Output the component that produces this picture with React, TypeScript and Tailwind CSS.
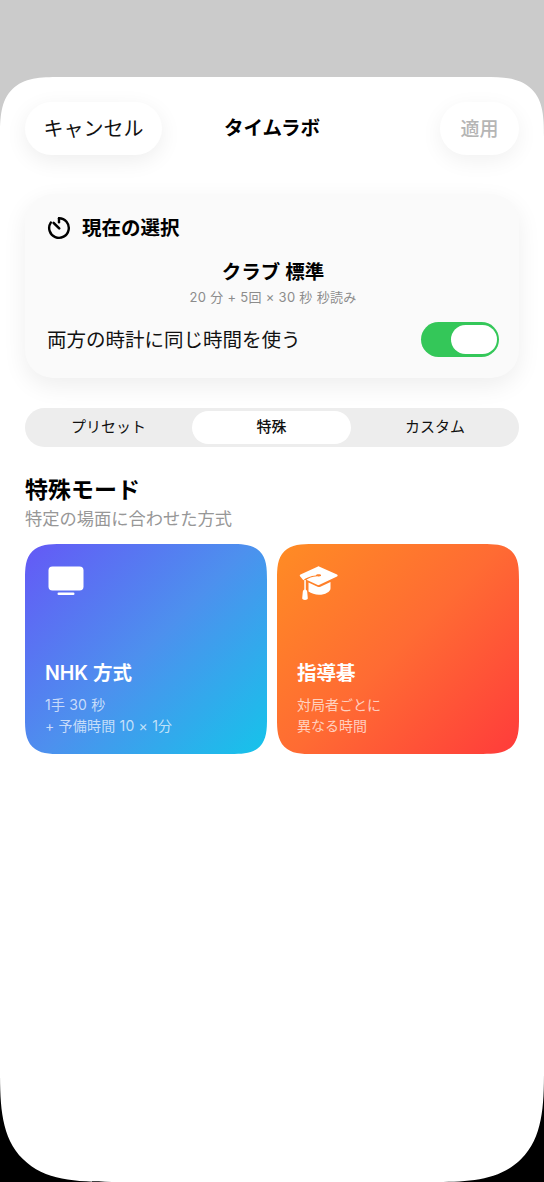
const font = "font-['Inter','Noto_Sans_CJK_JP',sans-serif]";

const TimerIcon = () => (
  <svg width="24" height="24" viewBox="0 0 24 24" fill="none" stroke="#000" strokeWidth="2.4" strokeLinecap="round">
    <path d="M12 2.200a9.800 9.800 0 1 1-8.200 4.400" />
    <path d="M12 2.200v4" />
    <path d="M6.600 6.800l5.600 5.600" strokeWidth="2.600" />
  </svg>
);

const TvIcon = () => (
  <svg width="36" height="30" viewBox="0 0 36 30" fill="#fff">
    <rect x="0.5" y="0.5" width="35" height="24" rx="4" />
    <rect x="9.5" y="26.5" width="17" height="2.5" rx="1.2" />
  </svg>
);

const CapIcon = () => (
  <svg width="40" height="36" viewBox="0 0 40 36" fill="#fff">
    <path d="M20 1.500 38 9.600c.9.500.9 1.500 0 2l-18 8.400c-.4.200-.9.200-1.300 0L7.400 14.800c1.800-1.600 5.600-3.200 11-3.600.8.400 2.600.4 3.400-.2.700-.6.200-1.400-1.100-1.700-1.800-.4-3.600.2-3.900 1.100-5.300.5-10 2.300-12.500 4.800L1.500 11.700c-1-.5-1-1.600 0-2.100L19 1.500c.3-.2.700-.2 1 0Z" />
    <path d="M9.500 17.600 18.600 21.800c.9.400 1.900.400 2.800 0l10.100-4.700v6.400c0 3.200-5.400 6.300-11.500 6.300-3.900 0-7.800-1.200-10.500-3.200Z" />
    <rect x="5.300" y="15" width="1.500" height="11" />
    <path d="M6 24.500c1.300 0 2.200 1 2.200 2.300l.6 6.500c0 1-1.300 1.700-2.800 1.700s-2.800-.7-2.800-1.700l.6-6.500c0-1.300.9-2.300 2.200-2.300Z" />
  </svg>
);

const Toggle = () => (
  <div className="flex h-[35px] w-[78px] items-center justify-end rounded-full bg-[#34c759] pr-[2px]">
    <div className="h-[29px] w-[46px] rounded-full bg-white" />
  </div>
);

const tabs = ["プリセット", "特殊", "カスタム"];

export default function App() {
  return (
    <div className={`h-[1182px] w-[544px] overflow-hidden bg-[linear-gradient(#cbcbcb_50%,#000_50%)] pt-[77px] ${font}`}>
      <div className="h-[1105px] rounded-t-[60px] rounded-b-[112px] bg-white px-[25px] [corner-shape:superellipse(1.6)]">
        <div className="grid grid-cols-[1fr_auto_1fr] items-center pt-[25px]">
          <button className="flex h-[53px] w-[137px] items-center justify-center rounded-full bg-white pt-[1px] text-[20px] text-[#111] shadow-[0_6px_22px_rgba(0,0,0,0.07)]">
            キャンセル
          </button>
          <div className="pt-[1px] text-[19.500px] font-semibold text-black">タイムラボ</div>
          <button className="flex h-[53px] w-[79px] items-center justify-center justify-self-end rounded-full bg-white pt-[3px] text-[19px] font-medium text-[#b5b5b5] shadow-[0_6px_22px_rgba(0,0,0,0.06)]">
            適用
          </button>
        </div>

        <section className="mt-[39px] h-[184px] rounded-[28px] bg-[#fafafa] pr-[20px] pl-[22px] pt-[22px] shadow-[0_8px_24px_rgba(0,0,0,0.07)]">
          <div className="flex items-center gap-[11px]">
            <TimerIcon />
            <h2 className="text-[19.500px] leading-[24px] font-semibold text-black">現在の選択</h2>
          </div>
          <div className="mt-[18px] text-center text-[19.500px] leading-[28px] font-semibold text-black">クラブ 標準</div>
          <div className="mt-[2px] text-center text-[13px] leading-[18px] tracking-[0.3px] text-[#8c8c8c]">20 分 + 5回 × 30 秒 秒読み</div>
          <div className="mt-[16px] flex items-center justify-between">
            <span className="text-[19.500px] leading-[28px] text-[#111]">両方の時計に同じ時間を使う</span>
            <Toggle />
          </div>
        </section>

        <div className="mt-[30px] grid h-[39px] grid-cols-[167px_159px_168px] items-center rounded-full bg-[#ededed] py-[3px]">
          {tabs.map((tab, i) => (
            <div
              key={tab}
              className={`flex h-[33px] items-center justify-center rounded-full text-[15px] text-[#111] ${
                i === 1 ? "bg-white font-medium" : ""
              }`}
            >
              {tab}
            </div>
          ))}
        </div>

        <h3 className="mt-[28px] text-[23px] leading-[30px] font-semibold text-black">特殊モード</h3>
        <p className="mt-[2px] text-[17.250px] leading-[24px] text-[#979797]">特定の場面に合わせた方式</p>

        <div className="mt-[13px] grid grid-cols-2 gap-[10px]">
          <div className="flex h-[210px] flex-col rounded-[36px] bg-[linear-gradient(135deg,#6459f6_0%,#4d90ee_50%,#15c4ea_100%)] px-[20px] pt-[22px] text-white [corner-shape:superellipse(1.6)]">
            <div className="ml-[2.500px] h-[32px]"><TvIcon /></div>
            <div className="mt-[61px] text-[19.500px] leading-[28px] font-semibold">NHK 方式</div>
            <div className="mt-[7px] text-[14px] leading-[21px] tracking-[0.2px] text-white/70">
              <div>1手 30 秒</div>
              <div>+ 予備時間 10 × 1分</div>
            </div>
          </div>
          <div className="flex h-[210px] flex-col rounded-[36px] bg-[linear-gradient(135deg,#ff8c24_0%,#ff6b33_50%,#ff3b3b_100%)] px-[20px] pt-[22px] text-white [corner-shape:superellipse(1.6)]">
            <div className="-mt-[1px] ml-[2px] h-[33px]"><CapIcon /></div>
            <div className="mt-[61px] text-[19.500px] leading-[28px] font-semibold">指導碁</div>
            <div className="mt-[7px] text-[14px] leading-[21px] text-white/70">
              <div>対局者ごとに</div>
              <div>異なる時間</div>
            </div>
          </div>
        </div>
      </div>
    </div>
  );
}
